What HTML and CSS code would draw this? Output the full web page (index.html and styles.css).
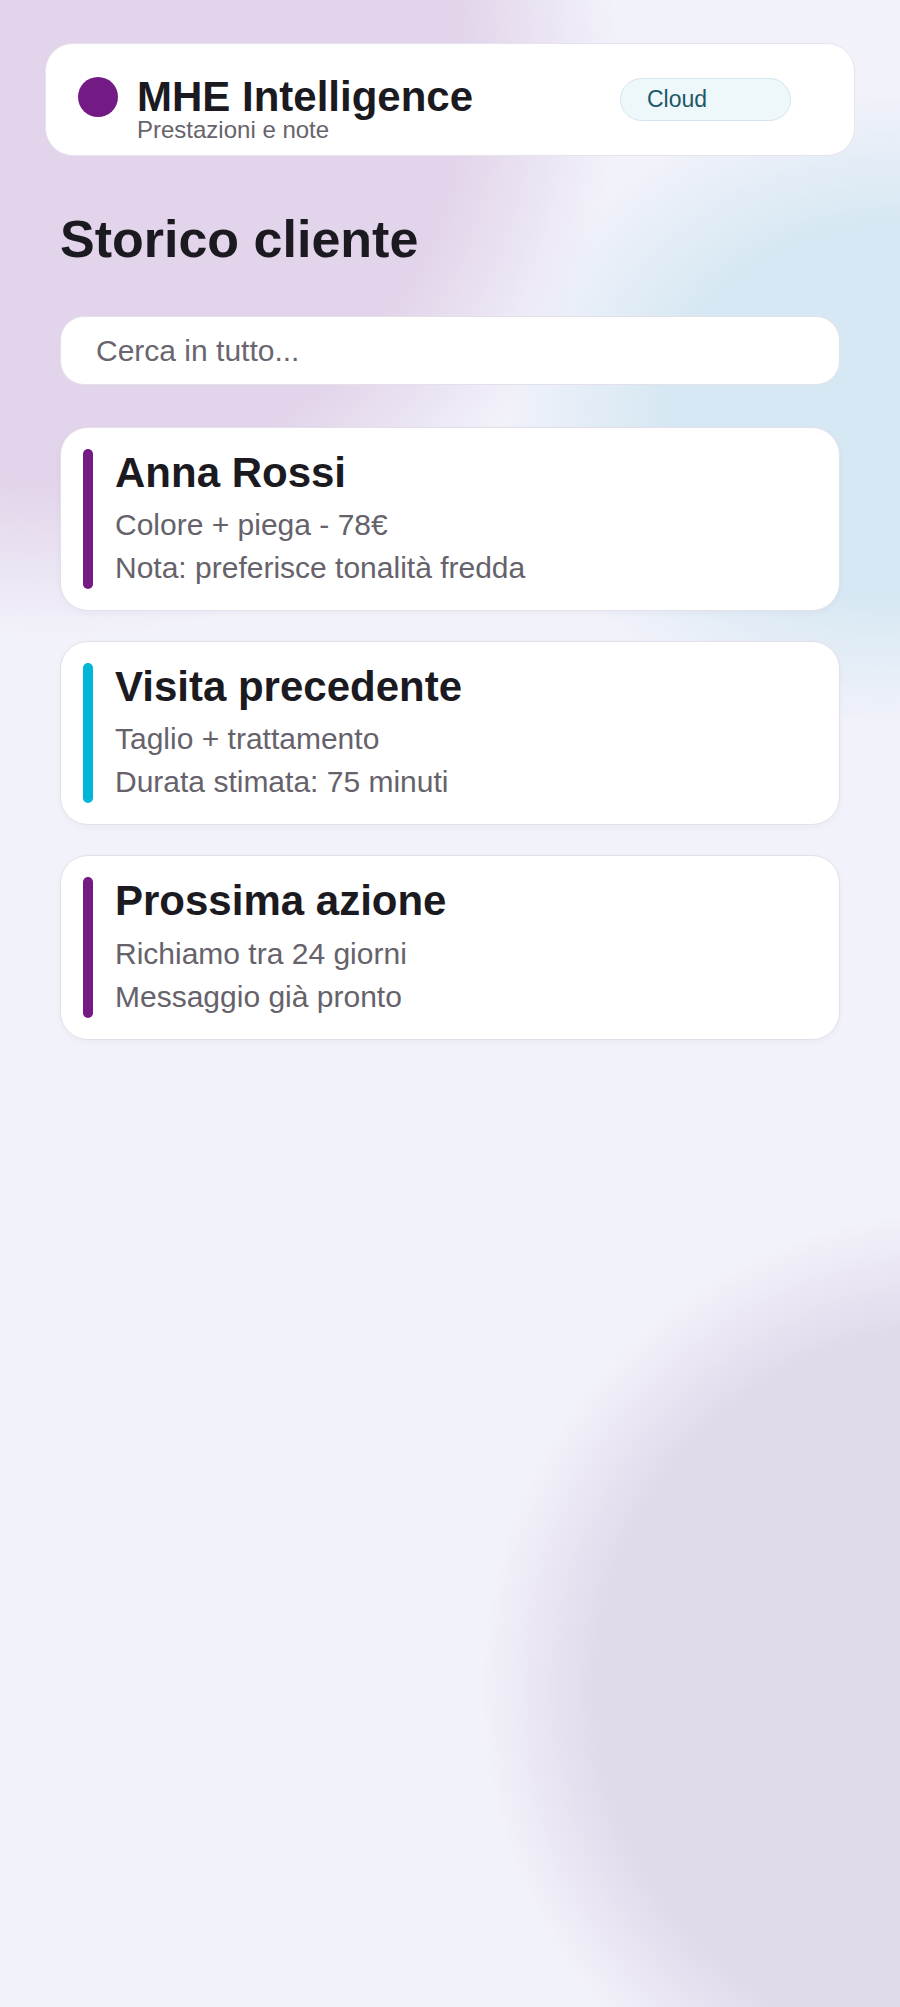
FILE: index.html
```html
<!DOCTYPE html>
<html lang="it">
<head>
  <meta charset="UTF-8">
  <title>MHE Intelligence - Storico cliente</title>
  <link rel="stylesheet" href="styles.css">
</head>
<body>
  <header class="topbar">
    <div class="brand">
      <span class="brand-dot"></span>
      <h1 class="brand-name">MHE Intelligence</h1>
      <p class="brand-sub">Prestazioni e note</p>
    </div>
    <span class="pill">Cloud</span>
  </header>

  <main class="content">
    <h2 class="page-title">Storico cliente</h2>
    <input class="search" type="text" placeholder="Cerca in tutto...">

    <!-- Client history cards -->
    <section class="cards">
      <article class="card">
        <span class="card-bar"></span>
        <div class="card-body">
          <h3>Anna Rossi</h3>
          <p>Colore + piega - 78€</p>
          <p>Nota: preferisce tonalità fredda</p>
        </div>
      </article>
      <article class="card">
        <span class="card-bar cyan"></span>
        <div class="card-body">
          <h3>Visita precedente</h3>
          <p>Taglio + trattamento</p>
          <p>Durata stimata: 75 minuti</p>
        </div>
      </article>
      <article class="card">
        <span class="card-bar"></span>
        <div class="card-body">
          <h3>Prossima azione</h3>
          <p>Richiamo tra 24 giorni</p>
          <p>Messaggio già pronto</p>
        </div>
      </article>
    </section>
  </main>
</body>
</html>
```

FILE: styles.css
```css
* {
  box-sizing: border-box;
}
html {
  background: #f2f2fa;
}
body {
  margin: 0;
  min-height: 100vh;
  padding: 43px 45px;
  font-family: 'Liberation Sans', Arial, sans-serif;
  color: #1c1a21;
  background:
    radial-gradient(circle 560px at 60px 80px, #e2d4ea 0, #e2d4ea 400px, rgba(226, 212, 234, 0) 100%),
    radial-gradient(ellipse 400px 320px at 900px 410px, #d6e8f3 0, #d6e8f3 58%, rgba(214, 232, 243, 0) 100%),
    radial-gradient(circle 480px at 960px 1690px, #e1daeb 0, #e1daeb 76%, rgba(225, 218, 235, 0) 100%),
    #f2f2fa;
}
.topbar {
  display: flex;
  align-items: center;
  height: 113px;
  padding: 0 63px 0 32px;
  background: #fff;
  border: 1px solid #e7e3ee;
  border-radius: 28px;
}
.brand {
  flex: 1;
  align-self: flex-start;
  margin-top: 32px;
  display: grid;
  grid-template-columns: 40px auto;
  column-gap: 19px;
}
.brand-dot {
  align-self: center;
  width: 40px;
  height: 40px;
  border-radius: 50%;
  background: #731a84;
}
.brand-name {
  margin: 0;
  font-size: 42px;
  line-height: 1;
  font-weight: 700;
}
.brand-sub {
  grid-column: 2;
  margin: 0;
  font-size: 24px;
  line-height: 1;
  color: #67636b;
}
.pill {
  display: flex;
  align-items: center;
  width: 171px;
  height: 43px;
  padding-left: 26px;
  font-size: 23px;
  color: #1e5868;
  background: #eef7fa;
  border: 1px solid #d4e6ee;
  border-radius: 22px;
}
.content {
  padding: 0 15px;
}
.page-title {
  margin: 54px 0 0;
  font-size: 52px;
  line-height: 1.15;
  font-weight: 700;
}
.search {
  display: block;
  width: 100%;
  height: 69px;
  margin-top: 46px;
  padding: 2px 35px 0;
  font-family: inherit;
  font-size: 30px;
  color: #1c1a21;
  background: #fff;
  border: 1px solid #e4e0ea;
  border-radius: 24px;
  outline: none;
}
.search::placeholder {
  color: #6a6670;
  opacity: 1;
}
.cards {
  display: flex;
  flex-direction: column;
  gap: 30px;
  margin-top: 42px;
}
.card {
  display: flex;
  gap: 22px;
  padding: 21px 22px 21px;
  background: #fff;
  border: 1px solid #e4e0ea;
  border-radius: 28px;
  box-shadow: 0 2px 6px rgba(60, 40, 90, 0.04);
}
.card-bar {
  flex: none;
  width: 10px;
  border-radius: 6px;
  background: #731a84;
}
.card-bar.cyan {
  background: #00b5d8;
}
.card-body h3 {
  margin: 0 0 6px;
  font-size: 42px;
  line-height: 1.15;
  font-weight: 700;
}
.card-body p {
  margin: 0;
  font-size: 30px;
  line-height: 43px;
  color: #66626b;
}
```
